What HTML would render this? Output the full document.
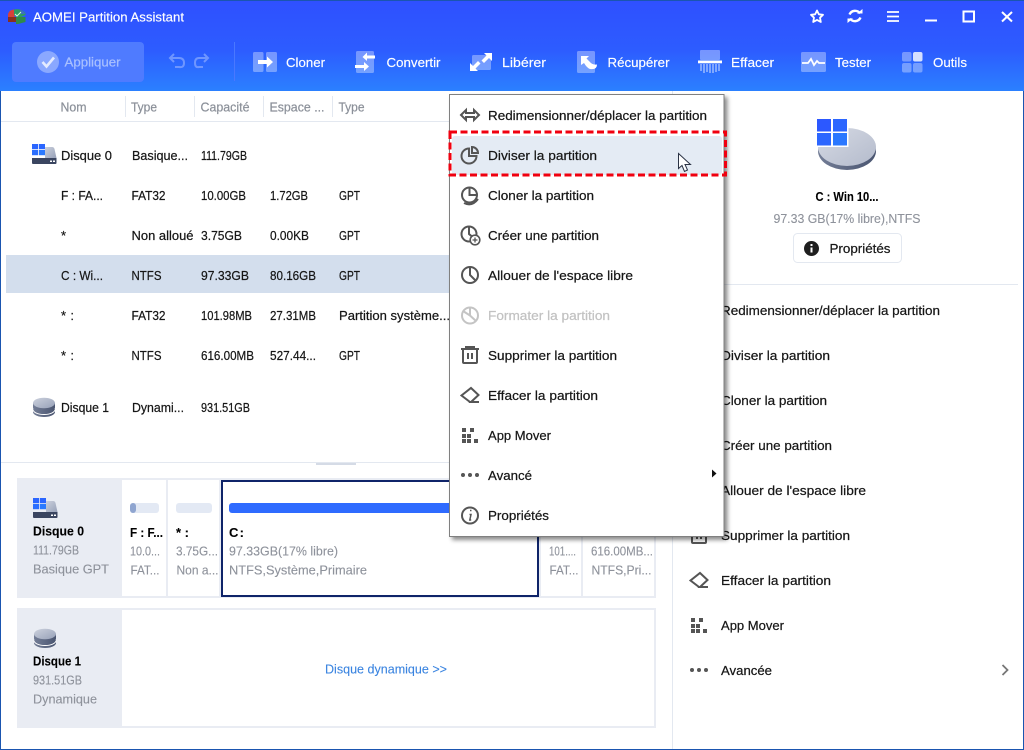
<!DOCTYPE html>
<html lang="fr">
<head>
<meta charset="utf-8">
<title>AOMEI Partition Assistant</title>
<style>
html,body{margin:0;padding:0;background:#fff;width:1024px;height:750px;overflow:hidden}
svg{display:block;position:absolute;left:0;top:0}
text{font-family:"Liberation Sans",sans-serif;font-size:13px;fill:#161616;stroke:#161616;stroke-width:.22px;white-space:pre}
.w{fill:#fff;stroke:#fff;stroke-width:.15px}
.h{fill:#8b9099;stroke:#8b9099}
.g{fill:#8e929b;stroke:#8e929b;stroke-width:.12px}
.b{font-weight:bold;fill:#000;stroke:#000;stroke-width:.1px}
.d{fill:#c2c2c2;stroke:#c2c2c2}
.a{fill:#a9c0ff;stroke:#a9c0ff}
.l{fill:#3a84e0;stroke:#3a84e0;stroke-width:.1px}
.ic{fill:none;stroke:#555;stroke-width:2}
</style>
</head>
<body>
<svg width="1024" height="750" viewBox="0 0 1024 750" xmlns="http://www.w3.org/2000/svg">
<defs>
<linearGradient id="hd" x1="0" y1="0" x2="0" y2="1"><stop offset="0" stop-color="#2f50ff"/><stop offset=".55" stop-color="#2d5cff"/><stop offset="1" stop-color="#2b80ff"/></linearGradient>
<linearGradient id="dk" x1="0" y1="0" x2="1" y2="1"><stop offset="0" stop-color="#d6dae4"/><stop offset="1" stop-color="#b4bbcc"/></linearGradient>
<linearGradient id="dk2" x1="0" y1="0" x2="1" y2="1"><stop offset="0" stop-color="#ccd1dd"/><stop offset="1" stop-color="#97a1b8"/></linearGradient>
<linearGradient id="sd" x1="0" y1="0" x2="1" y2="0"><stop offset="0" stop-color="#737d96"/><stop offset="1" stop-color="#4a5570"/></linearGradient>
<g id="eraser"><path class="ic" d="M470 402L461.500 395.500L471 388L478.500 395L471 402H479"/></g>
<g id="app" fill="#555"><rect x="462" y="428" width="4" height="4"/><rect x="470" y="428" width="4" height="4"/><rect x="462" y="434" width="4" height="4"/><rect x="467" y="434" width="4" height="4"/><rect x="462" y="439" width="4" height="4"/><rect x="467" y="439" width="4" height="4"/><rect x="474" y="439" width="4" height="4"/></g>
<g id="dots" fill="#555"><circle cx="463" cy="475" r="2"/><circle cx="470" cy="475" r="2"/><circle cx="477" cy="475" r="2"/></g>
<g id="trash"><path class="ic" d="M461 349H479M466 349V347H474V349M463 349V362Q463 363 464 363H476Q477 363 477 362V349M468 353V359M472 353V359"/></g>
<g id="wdisk">
<path d="M13 3H20Q22 3 22.500 5L24.500 14H13Z" fill="url(#dk2)"/>
<path d="M0 14H24.500V19Q24.500 20 23.500 20H1Q0 20 0 19Z" fill="#3a4560"/>
<rect x="18" y="16.500" width="2" height="1.500" fill="#fff"/><rect x="21" y="16.500" width="2" height="1.500" fill="#fff"/>
<rect x="0" y="0" width="6.200" height="5.200" fill="#2b66ff"/><rect x="7" y="0" width="6" height="5.200" fill="#2b66ff"/>
<rect x="0" y="6" width="6.200" height="5.200" fill="#2b6fff"/><rect x="7" y="6" width="6" height="5.200" fill="#2b7aff"/>
</g>
<g id="stack">
<path d="M0 12V15A11 5 0 0 0 22 15V12Z" fill="url(#sd)"/>
<path d="M0 12.500A11 5 0 0 0 22 12.500" fill="none" stroke="#fff" stroke-width="1"/>
<path d="M0 6V10.500A11 5 0 0 0 22 10.500V6Z" fill="url(#sd)"/>
<ellipse cx="11" cy="6" rx="11" ry="5.300" fill="url(#dk2)"/>
</g>
<filter id="sh" x="-5%" y="-5%" width="112%" height="112%"><feDropShadow dx="3" dy="3" stdDeviation="2" flood-color="#000" flood-opacity=".45"/></filter>
</defs>

<!-- window -->
<rect width="1024" height="750" fill="#fff"/>
<rect width="1024" height="91" fill="url(#hd)"/>

<!-- logo -->
<path d="M8 20V14Q9 10 14 9.500L18 12L14 17Z" fill="#d8403a"/>
<path d="M14 9.500Q21 8 25.500 13V15L19 18L14 15Z" fill="#2e9b62"/>
<path d="M20 9.500Q24 11 25.500 14L21 14Z" fill="#3d6fc0"/>
<path d="M8 17H16V22H8Z" fill="#8a2f1e"/>
<path d="M16 17H25.500V22L18 24H16Z" fill="#2f8a4a"/>
<path d="M15 14L17 16L21 12" fill="none" stroke="#d9f7d9" stroke-width="1"/>
<text class="w" x="33" y="21.500" textLength="151" lengthAdjust="spacingAndGlyphs">AOMEI Partition Assistant</text>

<!-- window controls -->
<path d="M817 10.500L818.800 14.300L823 14.800L820 17.700L820.800 22L817 19.900L813.200 22L814 17.700L811 14.800L815.200 14.300Z" fill="none" stroke="#fff" stroke-width="1.800" stroke-linejoin="round"/>
<path d="M849.500 14.500A6 6 0 0 1 860 13.500M860.500 17.500A6 6 0 0 1 850 18.500" fill="none" stroke="#fff" stroke-width="2.400"/>
<path d="M857 13.500H862.500V9ZM853 18.500H847.500V23Z" fill="#fff"/>
<path d="M887 12H899M887 16.500H899M887 21H899" stroke="#fff" stroke-width="1.800"/>
<path d="M925 20.500H937" stroke="#fff" stroke-width="2"/>
<rect x="963.500" y="11.500" width="10.500" height="10" fill="none" stroke="#fff" stroke-width="2"/>
<path d="M1002 12L1012 21.500M1012 12L1002 21.500" stroke="#fff" stroke-width="2"/>

<!-- apply -->
<rect x="12" y="42" width="132" height="40" rx="4" fill="#4f7bff"/>
<circle cx="48" cy="62" r="11" fill="#8aa8ff"/>
<path d="M42.500 62L46.500 66.500L54 57.500" fill="none" stroke="#e4ebff" stroke-width="2.600"/>
<text class="a" x="64.500" y="66.500" textLength="56" lengthAdjust="spacingAndGlyphs">Appliquer</text>
<path d="M170 58H179Q184 58 184 63T179 67H175M174 54L170 58L174 62" fill="none" stroke="#6f96ff" stroke-width="2"/>
<path d="M208 58H199Q195 58 195 63T199 67H203M204 54L208 58L204 62" fill="none" stroke="#6f96ff" stroke-width="2"/>
<rect x="234" y="42" width="1" height="39" fill="#4a78ff"/>

<!-- toolbar icons -->
<g fill="#fff">
<rect x="253" y="52" width="10.500" height="20" rx="1.500" opacity=".35"/><rect x="266" y="52" width="11" height="20" rx="1.500" opacity=".35"/>
<path d="M258 60H267V56.500L273 62L267 67.500V64H258Z"/>

<rect x="356" y="51" width="18" height="22" rx="1.500" opacity=".35"/>
<path d="M375 55.500H367V52.500L362.500 57L367 61V58.500H375Z"/>
<path d="M355 65H364V62L369 66.500L364 71V68H355Z"/>

<rect x="472" y="55" width="19" height="15" rx="1.500" opacity=".35"/>
<path d="M492 53V61L489 58L484 63L481.500 60.500L486.500 55.500L484 53Z"/>
<path d="M470 71V63L473 66L478 61L480.500 63.500L475.500 68.500L478 71Z"/>

<rect x="577" y="51" width="18" height="22" rx="1.500" opacity=".35"/>
<path d="M581 56H589L586.500 58.500L590 62Q592 65 597 64.500Q597 70 590 69Q587 68 584 63L581 65Z"/>

<rect x="700" y="50" width="20" height="10" rx="1" opacity=".35"/>
<rect x="698" y="60.500" width="24" height="2.800"/>
<g opacity=".4"><rect x="700" y="64" width="2" height="7"/><rect x="703" y="64" width="2" height="9"/><rect x="706" y="64" width="2" height="8"/><rect x="709" y="64" width="2" height="9"/><rect x="712" y="64" width="2" height="9"/><rect x="715" y="64" width="2" height="8"/><rect x="718" y="64" width="2" height="7"/></g>

<rect x="801" y="52" width="25" height="20" rx="1.500" opacity=".35"/>
<path d="M802 63H808L811 59L814 65L817 61L819 63H825" fill="none" stroke="#fff" stroke-width="1.800"/>

<rect x="902" y="52" width="9.500" height="9.500" rx="2" opacity=".35"/><rect x="913" y="52" width="9.500" height="9.500" rx="2" opacity=".8"/>
<rect x="902" y="63" width="9.500" height="9.500" rx="2" opacity=".35"/><rect x="913" y="63" width="9.500" height="9.500" rx="2" opacity=".35"/>
</g>
<text class="w" x="286" y="67" textLength="39" lengthAdjust="spacingAndGlyphs">Cloner</text>
<text class="w" x="386.500" y="67" textLength="54" lengthAdjust="spacingAndGlyphs">Convertir</text>
<text class="w" x="502" y="67" textLength="44" lengthAdjust="spacingAndGlyphs">Libérer</text>
<text class="w" x="607.500" y="67" textLength="62" lengthAdjust="spacingAndGlyphs">Récupérer</text>
<text class="w" x="731" y="67" textLength="43" lengthAdjust="spacingAndGlyphs">Effacer</text>
<text class="w" x="835" y="67" textLength="36" lengthAdjust="spacingAndGlyphs">Tester</text>
<text class="w" x="933" y="67" textLength="34" lengthAdjust="spacingAndGlyphs">Outils</text>

<!-- borders -->
<rect x="0" y="91" width="1" height="659" fill="#1a55b0"/>
<rect x="1023" y="91" width="1" height="659" fill="#1a55b0"/>
<rect x="0" y="749" width="1024" height="1" fill="#1a55b0"/>
<rect x="0" y="0" width="1024" height="1" fill="#1a55b0"/>
<rect x="672" y="91" width="1" height="658" fill="#e3e8f0"/>

<!-- table header -->
<rect x="1" y="121" width="671" height="1" fill="#e3e8f0"/>
<g fill="#e3e8f0"><rect x="125" y="96" width="1" height="21"/><rect x="194" y="96" width="1" height="21"/><rect x="263" y="96" width="1" height="21"/><rect x="332" y="96" width="1" height="21"/></g>
<text class="h" x="60.500" y="111.500" textLength="26" lengthAdjust="spacingAndGlyphs">Nom</text>
<text class="h" x="131" y="111.500" textLength="26" lengthAdjust="spacingAndGlyphs">Type</text>
<text class="h" x="200.500" y="111.500" textLength="49" lengthAdjust="spacingAndGlyphs">Capacité</text>
<text class="h" x="269.500" y="111.500" textLength="55" lengthAdjust="spacingAndGlyphs">Espace ...</text>
<text class="h" x="338.500" y="111.500" textLength="26" lengthAdjust="spacingAndGlyphs">Type</text>

<!-- rows -->
<rect x="6" y="255" width="443" height="38" fill="#d3deed"/>
<use href="#wdisk" x="32" y="144"/>
<use href="#stack" x="33" y="397"/>
<text x="61" y="160" textLength="51" lengthAdjust="spacingAndGlyphs">Disque 0</text><text x="132" y="160" textLength="56" lengthAdjust="spacingAndGlyphs">Basique...</text><text x="201" y="160" textLength="46" lengthAdjust="spacingAndGlyphs">111.79GB</text>
<text x="61" y="200" textLength="42" lengthAdjust="spacingAndGlyphs">F : FA...</text><text x="131.500" y="200" textLength="34" lengthAdjust="spacingAndGlyphs">FAT32</text><text x="201" y="200" textLength="45" lengthAdjust="spacingAndGlyphs">10.00GB</text><text x="270" y="200" textLength="38" lengthAdjust="spacingAndGlyphs">1.72GB</text><text x="339" y="200" textLength="21" lengthAdjust="spacingAndGlyphs">GPT</text>
<text x="61" y="240">*</text><text x="131.500" y="240" textLength="62" lengthAdjust="spacingAndGlyphs">Non alloué</text><text x="201" y="240" textLength="41" lengthAdjust="spacingAndGlyphs">3.75GB</text><text x="270" y="240" textLength="39" lengthAdjust="spacingAndGlyphs">0.00KB</text><text x="339" y="240" textLength="21" lengthAdjust="spacingAndGlyphs">GPT</text>
<text x="61" y="280" textLength="42" lengthAdjust="spacingAndGlyphs">C : Wi...</text><text x="131.500" y="280" textLength="30" lengthAdjust="spacingAndGlyphs">NTFS</text><text x="201" y="280" textLength="48" lengthAdjust="spacingAndGlyphs">97.33GB</text><text x="270" y="280" textLength="46" lengthAdjust="spacingAndGlyphs">80.16GB</text><text x="339" y="280" textLength="21" lengthAdjust="spacingAndGlyphs">GPT</text>
<text x="61" y="320" textLength="13">* :</text><text x="131.500" y="320" textLength="34" lengthAdjust="spacingAndGlyphs">FAT32</text><text x="201" y="320" textLength="51" lengthAdjust="spacingAndGlyphs">101.98MB</text><text x="270" y="320" textLength="46" lengthAdjust="spacingAndGlyphs">27.31MB</text><text x="339" y="320" textLength="111" lengthAdjust="spacingAndGlyphs">Partition système...</text>
<text x="61" y="360" textLength="13">* :</text><text x="131.500" y="360" textLength="30" lengthAdjust="spacingAndGlyphs">NTFS</text><text x="201" y="360" textLength="53" lengthAdjust="spacingAndGlyphs">616.00MB</text><text x="270" y="360" textLength="46" lengthAdjust="spacingAndGlyphs">527.44...</text><text x="339" y="360" textLength="21" lengthAdjust="spacingAndGlyphs">GPT</text>
<text x="61" y="412" textLength="48" lengthAdjust="spacingAndGlyphs">Disque 1</text><text x="132" y="412" textLength="52" lengthAdjust="spacingAndGlyphs">Dynami...</text><text x="201" y="412" textLength="49" lengthAdjust="spacingAndGlyphs">931.51GB</text>

<!-- splitter -->
<rect x="1" y="462" width="671" height="1" fill="#e3e8f0"/>
<rect x="316" y="463" width="40" height="2" fill="#d5dbe6"/>

<!-- disk 0 card -->
<rect x="18" y="479" width="637" height="118" fill="#fff" stroke="#e9ecf3" stroke-width="2"/>
<rect x="17" y="478" width="105" height="120" fill="#e9ecf3"/>
<rect x="166" y="478" width="2" height="120" fill="#e9ecf3"/>
<rect x="219" y="478" width="2" height="120" fill="#e9ecf3"/>
<rect x="539" y="478" width="2" height="120" fill="#e9ecf3"/>
<rect x="581" y="478" width="2" height="120" fill="#e9ecf3"/>
<rect x="222" y="481" width="316" height="115" fill="#fff" stroke="#0f2469" stroke-width="2"/>
<use href="#wdisk" x="33" y="498"/>
<text class="b" x="33" y="535.500" textLength="51" lengthAdjust="spacingAndGlyphs">Disque 0</text>
<text class="g" x="33" y="554.500" textLength="46" lengthAdjust="spacingAndGlyphs">111.79GB</text>
<text class="g" x="33" y="573.500" textLength="76" lengthAdjust="spacingAndGlyphs">Basique GPT</text>
<rect x="130" y="503" width="29" height="10" rx="3" fill="#e3e9f4"/><rect x="130" y="503" width="6" height="10" rx="3" fill="#8fa5d0"/>
<rect x="176" y="503" width="36" height="10" rx="3" fill="#e3e9f4"/>
<rect x="229" y="503" width="305" height="10" rx="3" fill="#2f6bff"/>
<text class="b" x="130" y="537" textLength="33" lengthAdjust="spacingAndGlyphs">F : F...</text>
<text class="g" x="130" y="555.500" textLength="30" lengthAdjust="spacingAndGlyphs">10.0...</text>
<text class="g" x="130.500" y="574.500" textLength="29" lengthAdjust="spacingAndGlyphs">FAT...</text>
<text class="b" x="176" y="537" textLength="13">* :</text>
<text class="g" x="176" y="555.500" textLength="42" lengthAdjust="spacingAndGlyphs">3.75G...</text>
<text class="g" x="176.500" y="574.500" textLength="42" lengthAdjust="spacingAndGlyphs">Non a...</text>
<text class="b" x="229" y="537" textLength="15">C :</text>
<text class="g" x="229" y="555.500" textLength="109" lengthAdjust="spacingAndGlyphs">97.33GB(17% libre)</text>
<text class="g" x="229" y="574.500" textLength="138" lengthAdjust="spacingAndGlyphs">NTFS,Système,Primaire</text>
<text class="g" x="549" y="555.500" textLength="27" lengthAdjust="spacingAndGlyphs">101....</text>
<text class="g" x="549.500" y="574.500" textLength="29" lengthAdjust="spacingAndGlyphs">FAT...</text>
<text class="g" x="591" y="555.500" textLength="62" lengthAdjust="spacingAndGlyphs">616.00MB...</text>
<text class="g" x="591.500" y="574.500" textLength="60" lengthAdjust="spacingAndGlyphs">NTFS,Pri...</text>

<!-- disk 1 card -->
<rect x="18" y="609" width="637" height="118" fill="#fff" stroke="#e9ecf3" stroke-width="2"/>
<rect x="17" y="608" width="105" height="120" fill="#e9ecf3"/>
<use href="#stack" x="34" y="628"/>
<text class="b" x="33" y="665.500" textLength="48" lengthAdjust="spacingAndGlyphs">Disque 1</text>
<text class="g" x="33" y="684.500" textLength="49" lengthAdjust="spacingAndGlyphs">931.51GB</text>
<text class="g" x="33" y="703.500" textLength="64" lengthAdjust="spacingAndGlyphs">Dynamique</text>
<text class="l" x="325" y="673.500" textLength="122" lengthAdjust="spacingAndGlyphs">Disque dynamique &gt;&gt;</text>

<!-- right panel -->
<ellipse cx="847" cy="151" rx="29" ry="19" fill="url(#sd)"/>
<ellipse cx="847" cy="147" rx="29" ry="19" fill="url(#dk)"/>
<rect x="815" y="117" width="33.500" height="30" fill="#fff"/>
<rect x="817" y="119" width="14" height="12.500" fill="#2c58ff"/><rect x="833" y="119" width="14" height="12.500" fill="#2c66ff"/>
<rect x="817" y="133" width="14" height="12.500" fill="#2c66ff"/><rect x="833" y="133" width="14" height="12.500" fill="#2b78ff"/>
<text class="b" x="815.500" y="201" textLength="63" lengthAdjust="spacingAndGlyphs">C : Win 10...</text>
<text class="g" x="773.500" y="223" textLength="147" lengthAdjust="spacingAndGlyphs">97.33 GB(17% libre),NTFS</text>
<rect x="793.500" y="233.500" width="108" height="29" rx="4" fill="#fff" stroke="#e3e8f0"/>
<circle cx="811.500" cy="248.500" r="7.500" fill="#1f1f1f"/>
<rect x="810.500" y="247.500" width="2" height="5" fill="#fff"/><rect x="810.500" y="244" width="2" height="2" fill="#fff"/>
<text x="829.500" y="253" textLength="61" lengthAdjust="spacingAndGlyphs">Propriétés</text>
<rect x="680" y="284" width="338" height="1" fill="#e3e8f0"/>
<text x="721" y="315" textLength="219" lengthAdjust="spacingAndGlyphs">Redimensionner/déplacer la partition</text>
<text x="721" y="360" textLength="109" lengthAdjust="spacingAndGlyphs">Diviser la partition</text>
<text x="721" y="405" textLength="106" lengthAdjust="spacingAndGlyphs">Cloner la partition</text>
<text x="721" y="450" textLength="111" lengthAdjust="spacingAndGlyphs">Créer une partition</text>
<text x="721" y="495" textLength="145" lengthAdjust="spacingAndGlyphs">Allouer de l'espace libre</text>
<text x="721" y="540" textLength="129" lengthAdjust="spacingAndGlyphs">Supprimer la partition</text>
<text x="721" y="585" textLength="110" lengthAdjust="spacingAndGlyphs">Effacer la partition</text>
<text x="721" y="630" textLength="63" lengthAdjust="spacingAndGlyphs">App Mover</text>
<text x="721" y="675" textLength="51" lengthAdjust="spacingAndGlyphs">Avancée</text>
<use href="#trash" x="229" y="180"/>
<use href="#eraser" x="229" y="185"/>
<use href="#app" x="229" y="190"/>
<use href="#dots" x="229" y="195"/>
<path d="M1002.500 665L1007.500 670L1002.500 675" fill="none" stroke="#777" stroke-width="1.800"/>

<!-- context menu -->
<rect x="449.500" y="94.500" width="274.500" height="442" fill="#fff" stroke="#808080" filter="url(#sh)"/>
<rect x="452" y="136" width="270" height="39" rx="3" fill="#e4ebf4"/>

<path class="ic" d="M461 115L466 110V113H474V110L479 115L474 120V117H466V120Z"/>
<path class="ic" d="M469 148.500A7.500 7.500 0 1 0 476.500 156H469Z"/>
<path class="ic" d="M472 147V153H478A6 6 0 0 0 472 147Z"/>
<circle class="ic" cx="469.500" cy="195" r="7.500"/>
<path class="ic" d="M469.500 187.500V195H477M464 203Q472 207 478 199"/>
<circle class="ic" cx="469" cy="234" r="7.500"/>
<path class="ic" d="M469 226.500V234L475 239"/>
<circle cx="475" cy="240" r="4.800" fill="#fff" stroke="#555" stroke-width="1.600"/>
<path d="M472.500 240H477.500M475 237.500V242.500" stroke="#555" stroke-width="1.300"/>
<circle class="ic" cx="470" cy="275" r="8"/>
<path class="ic" d="M470 267.500V275L475.500 280.500"/>
<circle class="ic" cx="470" cy="315.500" r="8" style="stroke:#c4c4c4"/>
<path class="ic" d="M470 307.500V315.500L476 321M470 315.500L463 311" style="stroke:#c4c4c4"/>
<use href="#trash"/>
<use href="#eraser"/>
<use href="#app"/>
<use href="#dots"/>
<circle class="ic" cx="470" cy="515.500" r="8"/>
<path d="M469.500 514.500H471L469.800 520H471.200M470 510.500H471.500" fill="none" stroke="#555" stroke-width="1.500"/>

<text x="488" y="120" textLength="219" lengthAdjust="spacingAndGlyphs">Redimensionner/déplacer la partition</text>
<text x="488" y="160" textLength="109" lengthAdjust="spacingAndGlyphs">Diviser la partition</text>
<text x="488" y="200" textLength="106" lengthAdjust="spacingAndGlyphs">Cloner la partition</text>
<text x="488" y="240" textLength="111" lengthAdjust="spacingAndGlyphs">Créer une partition</text>
<text x="488" y="280" textLength="145" lengthAdjust="spacingAndGlyphs">Allouer de l'espace libre</text>
<text class="d" x="488" y="320" textLength="122" lengthAdjust="spacingAndGlyphs">Formater la partition</text>
<text x="488" y="360" textLength="129" lengthAdjust="spacingAndGlyphs">Supprimer la partition</text>
<text x="488" y="400" textLength="110" lengthAdjust="spacingAndGlyphs">Effacer la partition</text>
<text x="488" y="440" textLength="63" lengthAdjust="spacingAndGlyphs">App Mover</text>
<text x="488" y="480" textLength="44" lengthAdjust="spacingAndGlyphs">Avancé</text>
<text x="488" y="520" textLength="61" lengthAdjust="spacingAndGlyphs">Propriétés</text>
<path d="M712 469.500L716.500 473.500L712 477.500Z" fill="#111"/>

<!-- highlight -->
<rect x="450" y="132" width="275.500" height="43" fill="none" stroke="#f0000f" stroke-width="3" stroke-dasharray="7 3.500"/>

<!-- cursor -->
<path d="M678.500 153.500V168.500L682 165.500L684.500 171.500L687.500 170L685 164.500H690.500Z" fill="#fff" stroke="#2a3244" stroke-width="1"/>
</svg>
</body>
</html>
